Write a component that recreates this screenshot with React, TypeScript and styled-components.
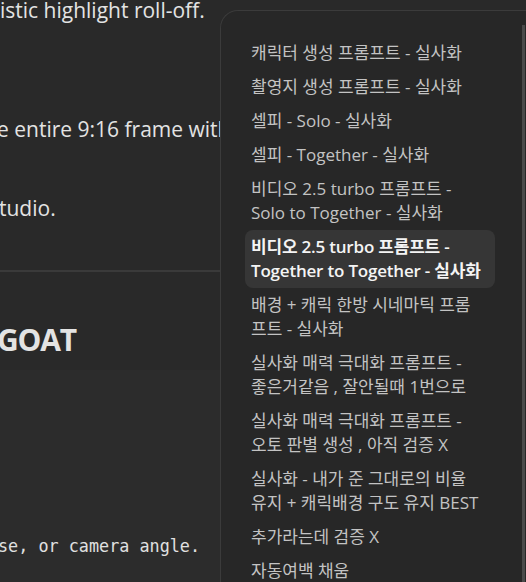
import styled, { createGlobalStyle } from 'styled-components'

const GlobalStyle = createGlobalStyle`
	html, body {
		margin: 0;
		padding: 0;
		background: #292929;
		overflow: hidden;
	}
	#root {
		height: 582px;
	}
`

const ITEMS = [
	'캐릭터 생성 프롬프트 - 실사화',
	'촬영지 생성 프롬프트 - 실사화',
	'셀피 - Solo - 실사화',
	'셀피 - Together - 실사화',
	'비디오 2.5 turbo 프롬프트 - Solo to Together - 실사화',
	'비디오 2.5 turbo 프롬프트 - Together to Together - 실사화',
	'배경 + 캐릭 한방 시네마틱 프롬프트 - 실사화',
	'실사화 매력 극대화 프롬프트 - 좋은거같음 , 잘안될때 1번으로',
	'실사화 매력 극대화 프롬프트 - 오토 판별 생성 , 아직 검증 X',
	'실사화 - 내가 준 그대로의 비율 유지 + 캐릭배경 구도 유지 BEST',
	'추가라는데 검증 X',
	'자동여백 채움',
]

const ACTIVE = 5

export default function App() {
	return (
		<>
			<GlobalStyle />
			<Layout>
				<Doc>
					<Para $top={-3}>istic highlight roll-off.</Para>
					<Para $top={93} $shift={-3}>e entire 9:16 frame without</Para>
					<Para $top={53} $shift={-1}>tudio.</Para>
					<Rule />
					<Heading $shift={-3}>GOAT</Heading>
					<CodeBlock>
						<Code $shift={-2}>se, or camera angle.</Code>
					</CodeBlock>
				</Doc>
				<Panel>
					<Outline>
						{ITEMS.map((label, i) => (
							<Item key={label} $active={i === ACTIVE}>
								{label}
							</Item>
						))}
					</Outline>
					<ScrollThumb />
				</Panel>
			</Layout>
		</>
	)
}

const Layout = styled.div`
	display: flex;
	height: 582px;
	font-family: 'Open Sans', 'Noto Sans CJK KR', sans-serif;
`

const Doc = styled.div`
	width: 220px;
	flex-shrink: 0;
	overflow: hidden;
	display: flex;
	flex-direction: column;
	color: #e3e3e3;
`

const Para = styled.p<{ $top: number; $shift?: number }>`
	margin: ${({ $top }) => $top}px 0 0 ${({ $shift = 0 }) => $shift}px;
	font-size: 21px;
	line-height: 26px;
	white-space: nowrap;
`

const Rule = styled.hr`
	margin: 49px 0 0;
	border: none;
	height: 2px;
	background: #3a3a3a;
`

const Heading = styled.h2<{ $shift?: number }>`
	margin: 0 0 0 ${({ $shift = 0 }) => $shift}px;
	height: 98px;
	display: flex;
	align-items: center;
	padding-top: 36px;
	box-sizing: border-box;
	font-size: 30px;
	font-weight: 700;
	letter-spacing: -1.2px;
	white-space: nowrap;
`

const CodeBlock = styled.div`
	flex: 1;
	background: #2c2c2c;
	display: flex;
	flex-direction: column;
	justify-content: flex-end;
	padding-bottom: 26px;
`

const Code = styled.code<{ $shift?: number }>`
	margin-left: ${({ $shift = 0 }) => $shift}px;
	font-family: 'DejaVu Sans Mono', monospace;
	font-size: 16.8px;
	line-height: 20px;
	color: #e0e0e0;
	white-space: nowrap;
`

const Panel = styled.aside`
	position: relative;
	flex: 1;
	margin-top: 10px;
	background: #272727;
	border: 1px solid #3b3b3b;
	border-right: none;
	border-bottom: none;
	border-top-left-radius: 18px;
	padding: 25px 0 0 24px;
	overflow: hidden;
`

const Outline = styled.nav`
	width: 250px;
	display: flex;
	flex-direction: column;
`

const Item = styled.div<{ $active?: boolean }>`
	padding: 5px ${({ $active }) => ($active ? 4 : 15)}px 5px 6px;
	border-radius: 8px;
	font-size: 17px;
	line-height: 24px;
	color: ${({ $active }) => ($active ? '#f4f4f4' : '#c3c3c3')};
	font-weight: ${({ $active }) => ($active ? 600 : 400)};
	letter-spacing: ${({ $active }) => ($active ? '-0.2px' : '0')};
	background: ${({ $active }) => ($active ? '#363636' : 'transparent')};
`

const ScrollThumb = styled.div`
	position: absolute;
	top: 14px;
	right: 1px;
	bottom: 0;
	width: 3px;
	background: #4a4a4a;
`
